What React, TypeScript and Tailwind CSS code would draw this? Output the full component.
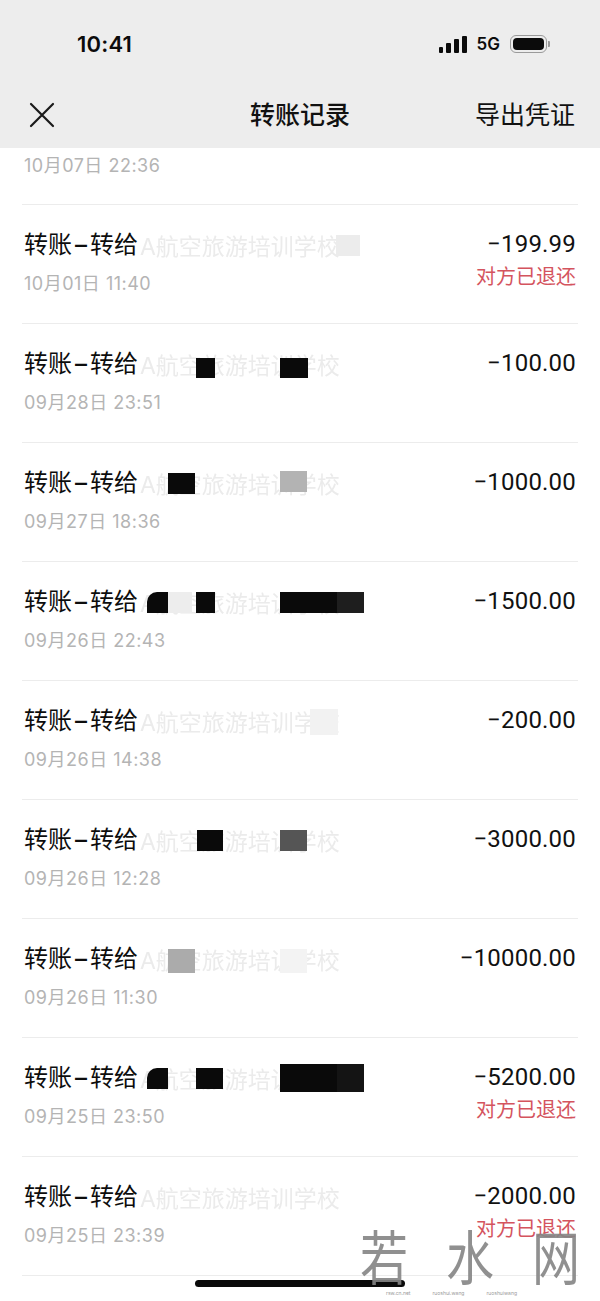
import React from "react";

type Block = { x: number; w: number; c: string; y?: number; h?: number; r?: string };
type Row = { amount: string; date: string; refund?: boolean; blocks: Block[] };

const FONT = { fontFamily: 'Inter, "Noto Sans CJK SC", sans-serif' } as React.CSSProperties;
const NUM = { fontFamily: 'Roboto, "Noto Sans CJK SC", sans-serif' } as React.CSSProperties;

const rows: Row[] = [
  { amount: "−199.99", date: "10月01日 11:40", refund: true, blocks: [{ x: 336, w: 24, c: "#ececec" }] },
  { amount: "−100.00", date: "09月28日 23:51", blocks: [{ x: 196, w: 19, c: "#0a0a0a", y: 4 }, { x: 280, w: 28, c: "#0a0a0a", y: 4 }] },
  { amount: "−1000.00", date: "09月27日 18:36", blocks: [{ x: 168, w: 27, c: "#0a0a0a" }, { x: 280, w: 27, c: "#b3b3b3", y: -2 }] },
  {
    amount: "−1500.00",
    date: "09月26日 22:43",
    blocks: [
      { x: 147, w: 21, c: "#0a0a0a", r: "rounded-tl-[10px]" },
      { x: 168, w: 24, c: "#ededed" },
      { x: 196, w: 19, c: "#0a0a0a" },
      { x: 280, w: 57, c: "#0a0a0a" },
      { x: 337, w: 27, c: "#1e1e1e" },
    ],
  },
  { amount: "−200.00", date: "09月26日 14:38", blocks: [{ x: 310, w: 28, c: "#f2f2f2", y: -2, h: 26 }] },
  { amount: "−3000.00", date: "09月26日 12:28", blocks: [{ x: 197, w: 26, c: "#0a0a0a" }, { x: 280, w: 27, c: "#555555" }] },
  { amount: "−10000.00", date: "09月26日 11:30", blocks: [{ x: 168, w: 27, c: "#ababab", h: 26 }, { x: 280, w: 27, c: "#f3f3f3", h: 26 }] },
  {
    amount: "−5200.00",
    date: "09月25日 23:50",
    refund: true,
    blocks: [
      { x: 147, w: 21, c: "#0a0a0a", r: "rounded-tl-[10px]" },
      { x: 196, w: 27, c: "#0a0a0a" },
      { x: 280, w: 57, c: "#0a0a0a", y: -4, h: 28 },
      { x: 337, w: 27, c: "#141414", y: -4, h: 28 },
    ],
  },
  { amount: "−2000.00", date: "09月25日 23:39", refund: true, blocks: [] },
];

function StatusBar() {
  return (
    <div className="h-[88px] flex items-center justify-between pl-[77px] pr-[50px]">
      <span className="text-[22px] font-semibold text-[#0b0b0b] tracking-[0.2px]" style={FONT}>
        10:41
      </span>
      <div className="flex items-center gap-[10px]">
        <div className="flex items-end gap-[3px] h-[17px]">
          <div className="w-[4px] h-[6px] bg-[#0b0b0b] rounded-[1px]" />
          <div className="w-[5px] h-[10px] bg-[#0b0b0b] rounded-[1px]" />
          <div className="w-[5px] h-[14px] bg-[#0b0b0b] rounded-[1px]" />
          <div className="w-[5px] h-[17px] bg-[#0b0b0b] rounded-[1px]" />
        </div>
        <span className="text-[17px] font-semibold text-[#0b0b0b] leading-none" style={FONT}>
          5G
        </span>
        <div className="flex items-center">
          <div className="w-[37px] h-[18px] rounded-[6px] border border-[#9a9a9a] p-[2px]">
            <div className="w-full h-full rounded-[4px] bg-[#0b0b0b]" />
          </div>
          <div className="w-[2px] h-[6px] rounded-r-[1px] bg-[#9a9a9a] ml-[1px]" />
        </div>
      </div>
    </div>
  );
}

function NavBar() {
  return (
    <div className="h-[56px] flex items-center justify-between px-[26px] relative">
      <svg width="32" height="32" viewBox="0 0 32 32">
        <path d="M5 4 L27 26 M27 4 L5 26" stroke="#1a1a1a" strokeWidth="2.2" strokeLinecap="round" fill="none" />
      </svg>
      <span className="absolute left-1/2 -translate-x-1/2 text-[25px] font-medium text-[#111]" style={FONT}>
        转账记录
      </span>
      <span className="text-[25px] text-[#111] -mr-[1px]" style={FONT}>
        导出凭证
      </span>
    </div>
  );
}

function RecordRow({ row }: { row: Row }) {
  return (
    <div className="mx-[22px] h-[119px] border-b border-[#ececec] flex justify-between pl-[2px] pr-[2px]">
      <div className="flex flex-col pt-[26px]">
        <div className="flex items-center h-[28px]">
          <span className="text-[24px] text-[#0d0d0d] leading-[28px] whitespace-nowrap" style={FONT}>
            转账<span className="mx-[3px] font-medium">–</span>转给
          </span>
          <div className="relative w-[230px] h-[28px] overflow-hidden">
            <span
              className="absolute left-[2px] top-[2px] text-[23px] leading-[28px] text-[#ebebeb] whitespace-nowrap blur-[0.6px]"
              style={FONT}
            >
              A航空旅游培训学校
            </span>
            {row.blocks.map((b, i) => (
              <div
                key={i}
                className={`absolute ${b.r ?? ""}`}
                style={{
                  left: b.x - 138,
                  width: b.w,
                  top: 4 + (b.y ?? 0),
                  height: b.h ?? 21,
                  background: b.c,
                }}
              />
            ))}
          </div>
        </div>
        <span
          className="mt-[14px] text-[18px] leading-[22px] text-[#b4b4b4] whitespace-nowrap tracking-[0.5px]"
          style={FONT}
        >
          {row.date}
        </span>
      </div>
      <div className="flex flex-col items-end pt-[25px]">
        <span className="text-[24px] leading-[28px] text-[#111] tracking-[0.2px]" style={NUM}>
          {row.amount}
        </span>
        {row.refund && (
          <span className="mt-[7px] text-[20px] leading-[24px] text-[#d4545e]" style={FONT}>
            对方已退还
          </span>
        )}
      </div>
    </div>
  );
}

export default function App() {
  return (
    <div className="w-[600px] h-[1301px] relative overflow-hidden bg-white flex flex-col">
      <div className="bg-[#ededed] h-[148px] shrink-0">
        <StatusBar />
        <NavBar />
      </div>
      <div className="flex-1 overflow-hidden">
        {/* partially scrolled-out row */}
        <div className="mx-[22px] h-[57px] border-b border-[#ececec] pl-[2px] pt-[6px]">
          <span className="text-[18px] leading-[22px] text-[#b4b4b4] whitespace-nowrap tracking-[0.5px]" style={FONT}>
            10月07日 22:36
          </span>
        </div>
        {rows.map((r, i) => (
          <RecordRow key={i} row={r} />
        ))}
      </div>

      {/* home indicator */}
      <div className="absolute left-[195px] top-[1280px] w-[210px] h-[7px] rounded-full bg-[#0a0a0a]" />

      {/* watermark */}
      <div className="absolute left-[360px] top-[1212px] flex flex-col items-start pointer-events-none">
        <div
          className="flex gap-[38px] text-[48px] leading-[70px] text-[#858585] opacity-[0.9] scale-y-[1.22] origin-top"
          style={{ fontFamily: '"Noto Sans CJK SC", sans-serif', fontWeight: 400 }}
        >
          <span>若</span>
          <span>水</span>
          <span>网</span>
        </div>
        <div className="flex gap-[22px] pl-[26px] mt-[8px] text-[5px] leading-[6px] text-[#9a9a9a]" style={FONT}>
          <span>rsw.cn.net</span>
          <span>ruoshui.wang</span>
          <span>ruoshuiwang</span>
        </div>
      </div>
    </div>
  );
}
